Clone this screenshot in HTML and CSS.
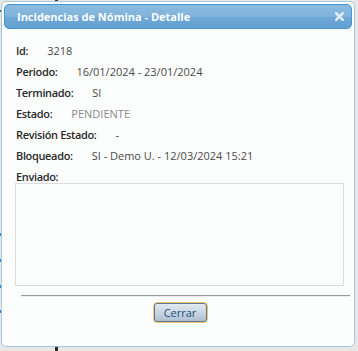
FILE: index.html
```html
<!DOCTYPE html>
<html lang="es">
<head>
<meta charset="utf-8">
<title>Incidencias de Nómina - Detalle</title>
<link rel="stylesheet" href="styles.css">
</head>
<body>
<div class="backdrop">
  <span class="mark mark-top"></span>
  <span class="mark mark-l1"></span>
  <span class="mark mark-l2"></span>
  <span class="mark mark-l3"></span>
  <span class="mark mark-l4"></span>
  <span class="mark mark-l5"></span>
  <span class="mark mark-bottom"></span>
</div>
<div class="dialog">
  <div class="titlebar">
    <span class="title">Incidencias de Nómina - Detalle</span>
    <span class="close" aria-label="close">
      <svg width="9" height="9" viewBox="0 0 9 9"><path d="M1.2 1.2 L7.8 7.8 M7.8 1.2 L1.2 7.8" stroke="#e3edf6" stroke-width="2.4" stroke-linecap="square" fill="none"/></svg>
    </span>
  </div>
  <div class="content">
    <div class="row"><span class="lbl">Id:</span><span class="val">3218</span></div>
    <div class="row"><span class="lbl">Periodo:</span><span class="val">16/01/2024 - 23/01/2024</span></div>
    <div class="row"><span class="lbl">Terminado:</span><span class="val">SI</span></div>
    <div class="row"><span class="lbl">Estado:</span><span class="val val-muted">PENDIENTE</span></div>
    <div class="row"><span class="lbl">Revisión Estado:</span><span class="val">-</span></div>
    <div class="row"><span class="lbl">Bloqueado:</span><span class="val">SI - Demo U. - 12/03/2024 15:21</span></div>
    <div class="row row-last"><span class="lbl">Enviado:</span></div>
    <textarea class="area" readonly></textarea>
  </div>
  <hr class="sep">
  <div class="buttons"><button class="btn" type="button">Cerrar</button></div>
</div>
</body>
</html>
```

FILE: styles.css
```css
html, body {
  margin: 0;
  padding: 0;
}
body {
  background: #e7e7e7;
  width: 358px;
  height: 351px;
  overflow: hidden;
  position: relative;
  font-family: "Open Sans", "Noto Sans", sans-serif;
  font-size: 11px;
}
.backdrop {
  position: absolute;
  inset: 0;
}
.mark {
  position: absolute;
  display: block;
}
.mark-top { left: 55px; top: 0; width: 3px; height: 1px; background: #333; }
.mark-l1 { left: 0; top: 10px; width: 2px; height: 2px; background: #556; }
.mark-l2 { left: 0; top: 233px; width: 1px; height: 3px; background: #3a7fc6; }
.mark-l3 { left: 0; top: 259px; width: 1px; height: 3px; background: #3a7fc6; }
.mark-l4 { left: 0; top: 285px; width: 1px; height: 3px; background: #3a7fc6; }
.mark-l5 { left: 0; top: 310px; width: 1px; height: 3px; background: #3a7fc6; }
.mark-bottom { left: 55px; top: 347px; width: 3px; height: 4px; background: #2a2a2a; }

.dialog {
  position: relative;
  box-sizing: border-box;
  margin: 1px 0 0 1px;
  width: 354px;
  height: 346px;
  padding: 2px;
  background: #fcfdfd;
  border: 1px solid #a6c9e2;
  border-radius: 5px;
  display: flex;
  flex-direction: column;
}
.titlebar {
  box-sizing: border-box;
  height: 25px;
  border: 1px solid #4297d7;
  border-radius: 5px;
  background: linear-gradient(#8bbae0 0%, #80b3db 50%, #6ea8d6 52%, #63a0d1 100%);
  display: flex;
  align-items: center;
  justify-content: space-between;
  padding: 0 7px 0 12px;
}
.title {
  color: #ffffff;
  font-weight: 700;
  font-size: 11px;
  line-height: 14px;
}
.close {
  display: flex;
  width: 9px;
  height: 9px;
}
.content {
  padding: 11px 0 0 11px;
  display: flex;
  flex-direction: column;
}
.row {
  display: flex;
  gap: 19px;
  line-height: 21px;
  padding-left: 1px;
}
.row-last {
  line-height: 13px;
  padding-top: 4px;
}
.lbl {
  color: #2a2a2a;
  font-weight: 600;
  letter-spacing: -0.35px;
}
.val {
  color: #4a4a4a;
}
.val-muted {
  color: #8a8a8a;
}
.area {
  box-sizing: border-box;
  width: 329px;
  height: 103px;
  margin: 0;
  border: 1px solid #dcdcdc;
  background: #fcfdfd;
  resize: none;
  font-family: inherit;
  font-size: 11px;
}
.sep {
  margin: 9px 2px 0 17px;
  height: 0;
  border: 0;
  border-top: 1px solid #9a9a9a;
  border-bottom: 1px solid #ececec;
}
.buttons {
  display: flex;
  justify-content: center;
  padding: 5px 0 0 4px;
}
.btn {
  box-sizing: border-box;
  width: 55px;
  height: 21px;
  padding: 0;
  border: 1px solid #f2c66a;
  border-radius: 4px;
  box-shadow: inset 0 0 0 1px #5f7790;
  background: linear-gradient(#e4ecf3 0%, #c9d6e2 50%, #aabdcd 100%);
  color: #1d4f7d;
  font-family: inherit;
  font-size: 11px;
  line-height: 17px;
}
```
